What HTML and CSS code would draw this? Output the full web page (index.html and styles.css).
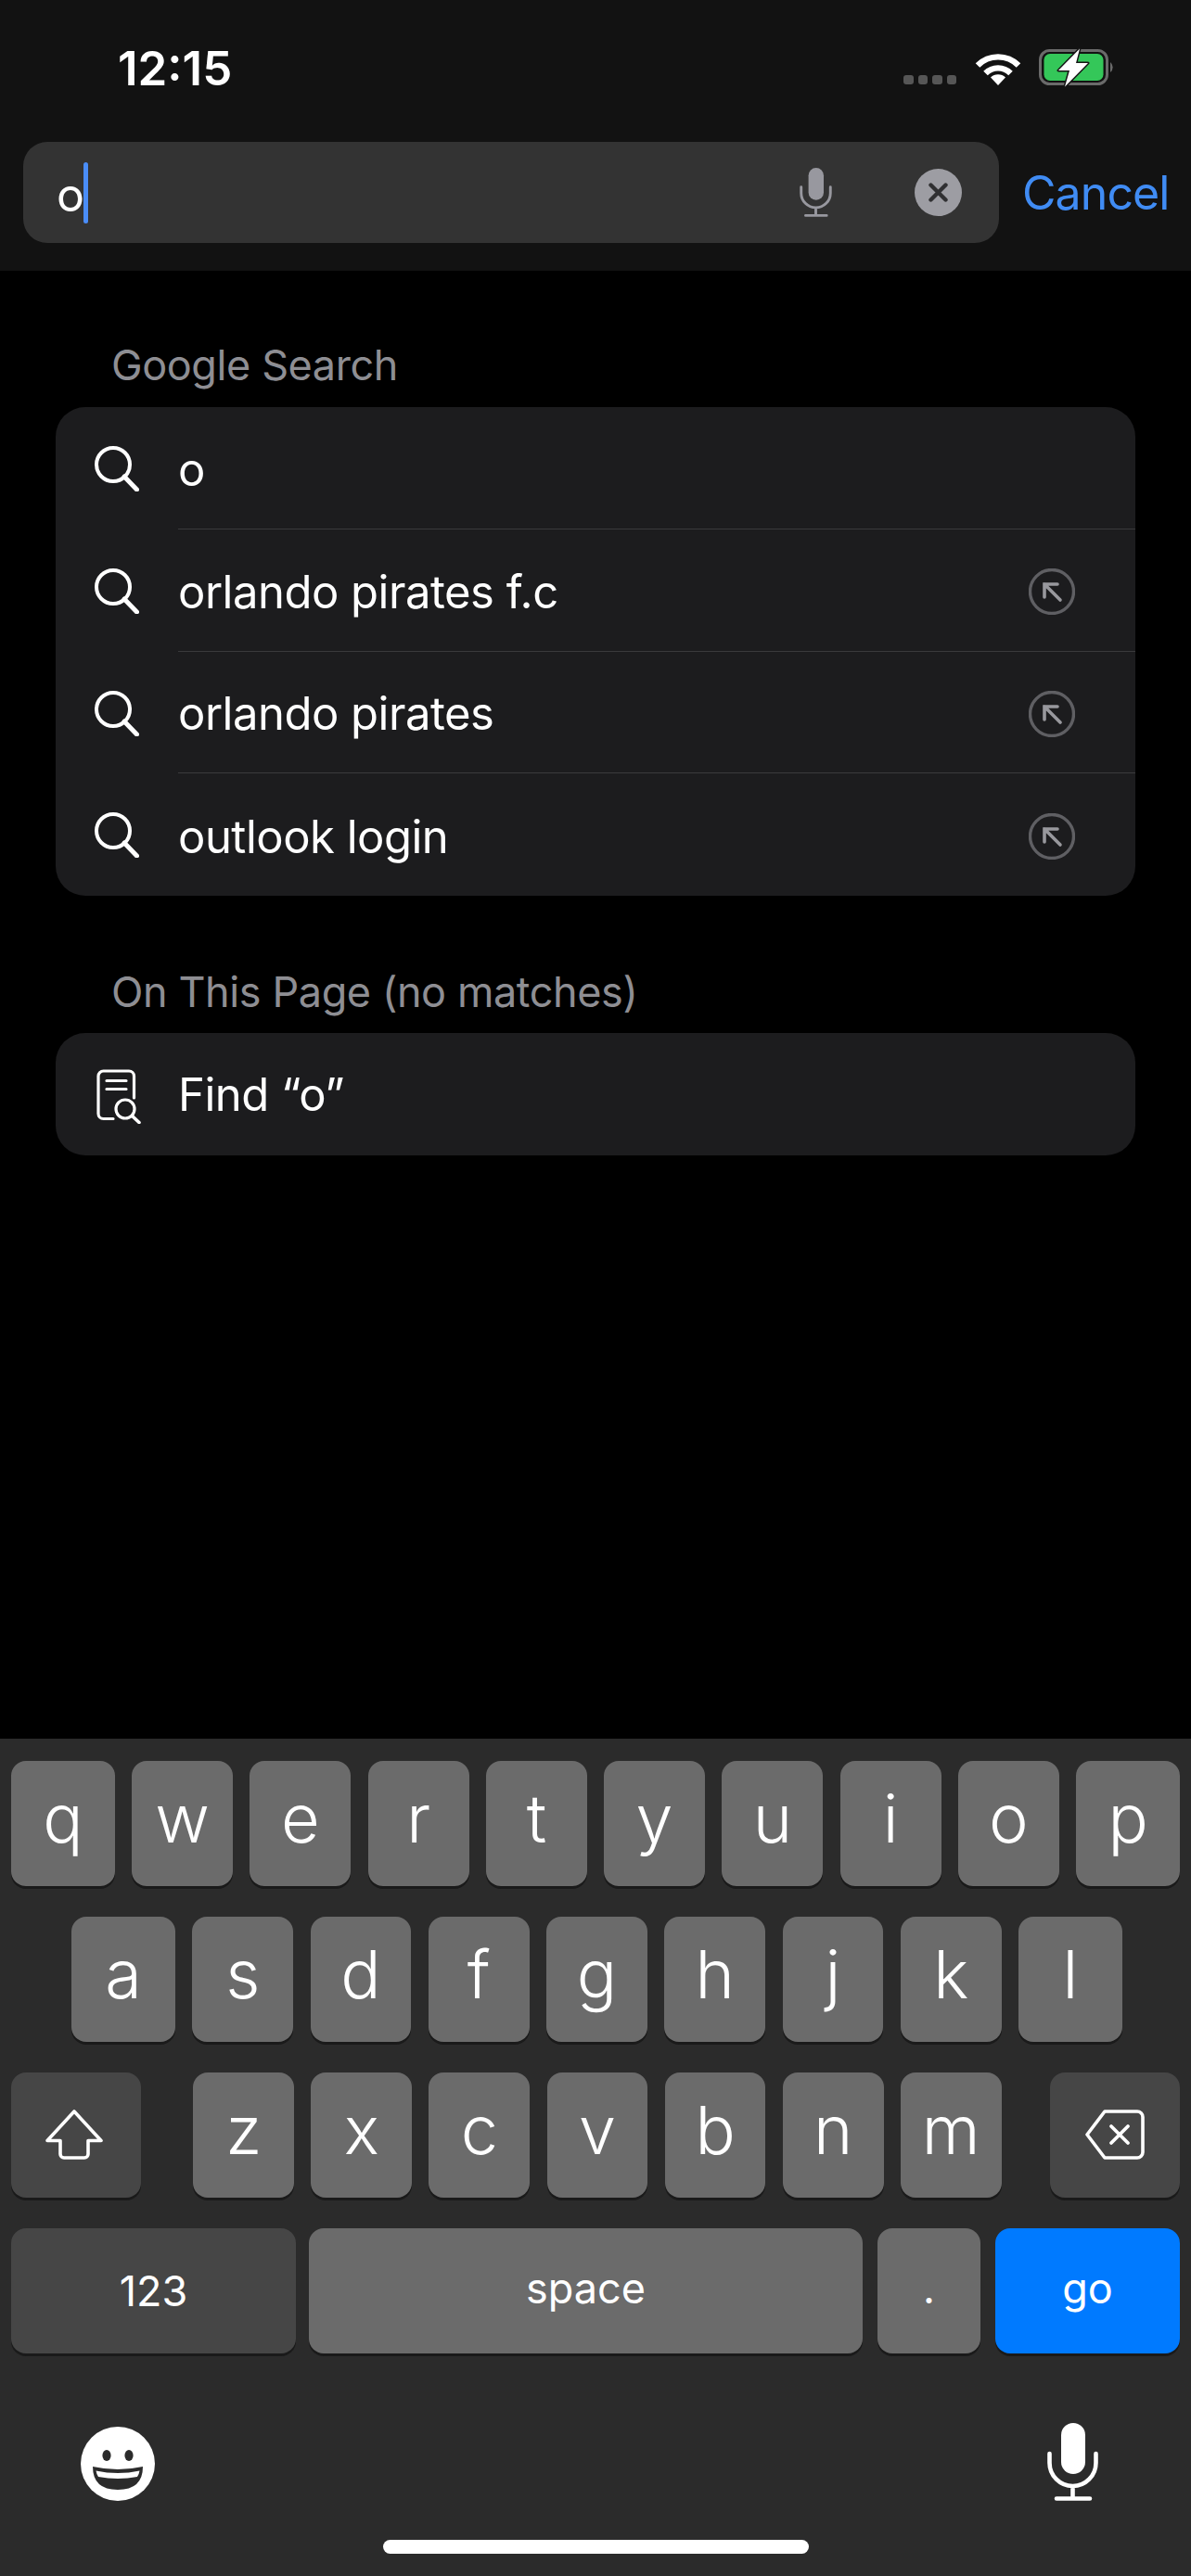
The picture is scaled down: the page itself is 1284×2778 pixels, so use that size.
FILE: index.html
```html
<!DOCTYPE html>
<html lang="en">
<head>
  <meta charset="UTF-8">
  <title>Search</title>
  <link rel="stylesheet" href="styles.css">
</head>
<body>

<svg class="defs" width="0" height="0">
  <symbol id="i-search" viewBox="0 0 48 49">
    <circle cx="20" cy="20" r="18" fill="none" stroke="#fff" stroke-width="4"/>
    <path d="M32 33 L45.5 47" fill="none" stroke="#fff" stroke-width="5" stroke-linecap="round"/>
  </symbol>
  <symbol id="i-arrow" viewBox="0 0 50 50">
    <circle cx="25" cy="25" r="23.5" fill="none" stroke="#5f5f63" stroke-width="3.4"/>
    <path d="M17 31 V17 H31 M17 17 L34 34" fill="none" stroke="#98989d" stroke-width="3.6" stroke-linecap="round"/>
  </symbol>
  <symbol id="i-mic" viewBox="0 0 55 84">
    <rect x="15" y="0" width="26" height="55" rx="13" fill="currentColor"/>
    <path d="M2.5 33 V43 A25 25 0 0 0 52.5 43 V33 M27.5 68 V81 M10 81.5 H46" fill="none" stroke="currentColor" stroke-width="4.6" stroke-linecap="round"/>
  </symbol>
</svg>

<!-- Top bar -->
<div class="top-bar">
  <div class="status-bar">
    <span class="time">12:15</span>
    <div class="status-icons">
      <div class="signal"><i></i><i></i><i></i><i></i></div>
      <svg class="wifi" width="50" height="37" viewBox="0 0 50 37">
        <path d="M3 15.5 A31 31 0 0 1 47 15.5" fill="none" stroke="#fff" stroke-width="6.4"/>
        <path d="M11.5 24 A19 19 0 0 1 38.5 24" fill="none" stroke="#fff" stroke-width="6.4"/>
        <path d="M25 37 L17 28.5 A11.5 11.5 0 0 1 33 28.5 Z" fill="#fff"/>
      </svg>
      <svg class="battery" width="83" height="42" viewBox="0 0 83 42">
        <rect x="2.5" y="2.5" width="72" height="36" rx="10" fill="none" stroke="#6a6a6a" stroke-width="3"/>
        <rect x="6.5" y="6" width="64" height="29" rx="6.5" fill="#34c759"/>
        <path d="M78 15 a7 7 0 0 1 0 11 Z" fill="#6a6a6a"/>
        <path d="M45 0.5 L22 24 H34 L29 41.5 L54 16 H41 Z" fill="#fff" stroke="#161616" stroke-width="3" stroke-linejoin="round" paint-order="stroke"/>
      </svg>
    </div>
  </div>
  <div class="search-row">
    <div class="search-field">
      <span class="query">o</span><span class="caret"></span>
      <svg class="field-mic" width="37" height="53"><use href="#i-mic"/></svg>
      <svg class="clear" width="51" height="51" viewBox="0 0 51 51">
        <circle cx="25.5" cy="25.5" r="25.5" fill="#9d9da3"/>
        <path d="M17.5 17.5 L33.5 33.5 M33.5 17.5 L17.5 33.5" stroke="#303032" stroke-width="4.4" stroke-linecap="round"/>
      </svg>
    </div>
    <span class="cancel">Cancel</span>
  </div>
</div>

<!-- Results -->
<div class="results">
  <h4 class="section-title">Google Search</h4>
  <div class="card">
    <div class="row">
      <svg class="row-icon" width="48" height="49"><use href="#i-search"/></svg>
      <div class="row-body"><span>o</span></div>
    </div>
    <div class="row">
      <svg class="row-icon" width="48" height="49"><use href="#i-search"/></svg>
      <div class="row-body"><span>orlando pirates f.c</span><svg width="50" height="50"><use href="#i-arrow"/></svg></div>
    </div>
    <div class="row">
      <svg class="row-icon" width="48" height="49"><use href="#i-search"/></svg>
      <div class="row-body"><span>orlando pirates</span><svg width="50" height="50"><use href="#i-arrow"/></svg></div>
    </div>
    <div class="row">
      <svg class="row-icon" width="48" height="49"><use href="#i-search"/></svg>
      <div class="row-body"><span>outlook login</span><svg width="50" height="50"><use href="#i-arrow"/></svg></div>
    </div>
  </div>

  <h4 class="section-title second">On This Page (no matches)</h4>
  <div class="card">
    <div class="row find-row">
      <svg class="row-icon" width="48" height="59" viewBox="0 0 48 59">
        <path d="M18 53.5 H7.5 A5.5 5.5 0 0 1 2 48 V7.5 A5.5 5.5 0 0 1 7.5 2 H35 A5.5 5.5 0 0 1 40.5 7.5 V31 M11 12.5 H32 M11 21.5 H32" fill="none" stroke="#fff" stroke-width="3.2" stroke-linecap="round"/>
        <circle cx="31" cy="43" r="10" fill="none" stroke="#fff" stroke-width="3.2"/>
        <path d="M38.5 50.5 L46 57.5" fill="none" stroke="#fff" stroke-width="3.6" stroke-linecap="round"/>
      </svg>
      <div class="row-body"><span>Find “o”</span></div>
    </div>
  </div>
</div>

<!-- Keyboard -->
<div class="keyboard">
  <div class="key-row">
    <div class="key wide">q</div><div class="key">w</div><div class="key">e</div><div class="key">r</div><div class="key">t</div><div class="key">y</div><div class="key">u</div><div class="key">i</div><div class="key">o</div><div class="key wide">p</div>
  </div>
  <div class="key-row row-two">
    <div class="key wide">a</div><div class="key">s</div><div class="key">d</div><div class="key">f</div><div class="key">g</div><div class="key">h</div><div class="key">j</div><div class="key">k</div><div class="key wide">l</div>
  </div>
  <div class="key-row">
    <div class="key fn shift">
      <svg width="62" height="54" viewBox="0 0 62 54"><path d="M31 2 L60 33.5 H46 V48 A4 4 0 0 1 42 52 H20 A4 4 0 0 1 16 48 V33.5 H2 Z" fill="none" stroke="#fff" stroke-width="3.6" stroke-linejoin="round"/></svg>
    </div>
    <div class="key">z</div><div class="key">x</div><div class="key">c</div><div class="key">v</div><div class="key">b</div><div class="key">n</div><div class="key">m</div>
    <div class="key fn delete">
      <svg width="64" height="54" viewBox="0 0 64 54"><path d="M21 2 H56 A6 6 0 0 1 62 8 V46 A6 6 0 0 1 56 52 H21 L2 27 Z" fill="none" stroke="#fff" stroke-width="3.6" stroke-linejoin="round"/><path d="M28 18 L46 36 M46 18 L28 36" stroke="#fff" stroke-width="3.8" stroke-linecap="round"/></svg>
    </div>
  </div>
  <div class="key-row bottom-keys">
    <div class="key fn small k-123">123</div>
    <div class="key small k-space">space</div>
    <div class="key small k-dot">.</div>
    <div class="key small k-go">go</div>
  </div>
  <div class="kb-tools">
    <svg width="80" height="80" viewBox="0 0 80 80">
      <circle cx="40" cy="40" r="40" fill="#fff"/>
      <ellipse cx="28" cy="31" rx="4.6" ry="6" fill="#2b2b2b"/>
      <ellipse cx="52" cy="31" rx="4.6" ry="6" fill="#2b2b2b"/>
      <path d="M13 43 Q40 49 67 43 Q67 68 40 68 Q13 68 13 43 Z" fill="#2b2b2b"/>
      <path d="M16.5 47.5 Q40 52.5 63.5 47.5 Q63 51 61 54 Q40 58 19 54 Q17 51 16.5 47.5 Z" fill="#fff"/>
    </svg>
    <svg class="kb-mic" width="55" height="84"><use href="#i-mic"/></svg>
  </div>
  <div class="home-bar"></div>
</div>

</body>
</html>
```

FILE: styles.css
```css
body {
  margin: 0;
  width: 1284px;
  height: 2778px;
  display: flex;
  flex-direction: column;
  overflow: hidden;
  background-color: #000;
  color: #fff;
  font-family: Inter, "Noto Sans", sans-serif;
}
.defs {
  display: none;
}

/* top bar */
.top-bar {
  height: 292px;
  background-color: #121212;
}
.status-bar {
  height: 153px;
  box-sizing: border-box;
  padding: 44px 82px 0 127px;
  display: flex;
  justify-content: space-between;
  align-items: flex-start;
}
.time {
  font-size: 51px;
  font-weight: 600;
  line-height: 60px;
}
.status-icons {
  display: flex;
  align-items: flex-start;
  padding-top: 8px;
}
.signal {
  display: flex;
  gap: 5px;
  margin-top: 29px;
  margin-right: 20px;
}
.signal i {
  width: 10.5px;
  height: 10px;
  border-radius: 3px;
  background-color: #565656;
}
.wifi {
  margin-top: 3px;
  margin-right: 18px;
}
.search-row {
  display: flex;
  align-items: center;
  padding-left: 25px;
}
.search-field {
  width: 1052px;
  height: 109px;
  box-sizing: border-box;
  padding-left: 36px;
  display: flex;
  align-items: center;
  border-radius: 26px;
  background-color: #333;
}
.query {
  font-size: 50px;
  line-height: 60px;
  margin-top: 4px;
}
.caret {
  width: 5px;
  height: 66px;
  margin-left: -1px;
  border-radius: 3px;
  background-color: #4a8df8;
}
.field-mic {
  margin-left: 766.5px;
  color: #98989f;
}
.clear {
  margin-left: 88px;
}
.cancel {
  margin-left: 25px;
  font-size: 50px;
  line-height: 60px;
  letter-spacing: -0.9px;
  color: #408cf4;
}

/* results */
.results {
  flex: 1;
  padding: 72px 60px 0;
}
.section-title {
  margin: 2px 0 17px 60px;
  font-size: 45px;
  font-weight: 400;
  line-height: 56px;
  letter-spacing: -0.4px;
  color: #8e8e93;
}
.section-title.second {
  margin-top: 76px;
  margin-bottom: 16px;
}
.card {
  border-radius: 32px;
  background-color: #1c1c1e;
  overflow: hidden;
}
.row {
  display: flex;
  height: 131.75px;
  font-size: 49px;
  letter-spacing: -0.5px;
}
.row-icon {
  flex: none;
  margin: 42px 42px 0 42px;
}
.row:last-child .row-body {
  border-bottom: none;
}
.find-row {
  height: 132px;
}
.find-row .row-icon {
  margin: 39px 40px 0 44px;
}
.find-row .row-body {
  padding-top: 1px;
}
.row-body {
  flex: 1;
  display: flex;
  justify-content: space-between;
  align-items: center;
  padding-right: 65px;
  padding-top: 4px;
  box-sizing: border-box;
  border-bottom: 1.5px solid #3a3a3c;
}

/* keyboard */
.keyboard {
  height: 903px;
  box-sizing: border-box;
  padding-top: 24px;
  background-color: #2b2b2b;
}
.key-row {
  display: flex;
  gap: 18.3px;
  height: 134.5px;
  margin-bottom: 33.5px;
  padding: 0 12px;
}
.row-two {
  padding: 0 74px 0 77px;
}
.key {
  flex: 109;
  display: flex;
  justify-content: center;
  align-items: center;
  border-radius: 16px;
  background-color: #6b6b6b;
  box-shadow: 0 3px 0 #1a1a1a;
  font-size: 72px;
  font-weight: 300;
  padding-bottom: 12px;
  box-sizing: border-box;
}
.key.wide {
  flex: 112;
}
.key.fn {
  background-color: #464646;
}
.shift,
.delete {
  flex: none;
  width: 140px;
  padding-bottom: 0;
}
.shift {
  margin-right: 38px;
  padding-right: 4px;
}
.delete {
  margin-left: 34px;
}
.bottom-keys {
  gap: 0;
}
.key.small {
  flex: none;
  font-size: 45px;
  font-weight: 400;
  padding-bottom: 6px;
}
.key.k-123 {
  width: 307px;
  padding-bottom: 0;
}
.k-space {
  width: 597px;
  margin-left: 14px;
}
.k-dot {
  width: 111px;
  margin-left: 16px;
}
.key.k-go {
  width: 199px;
  margin-left: 16px;
  background-color: #007aff;
}
.kb-tools {
  display: flex;
  justify-content: space-between;
  align-items: flex-end;
  padding: 0 100px 0 87px;
  margin-top: 75px;
}
.home-bar {
  width: 459px;
  height: 15px;
  margin: 42px auto 0;
  border-radius: 8px;
  background-color: #fff;
}
```
